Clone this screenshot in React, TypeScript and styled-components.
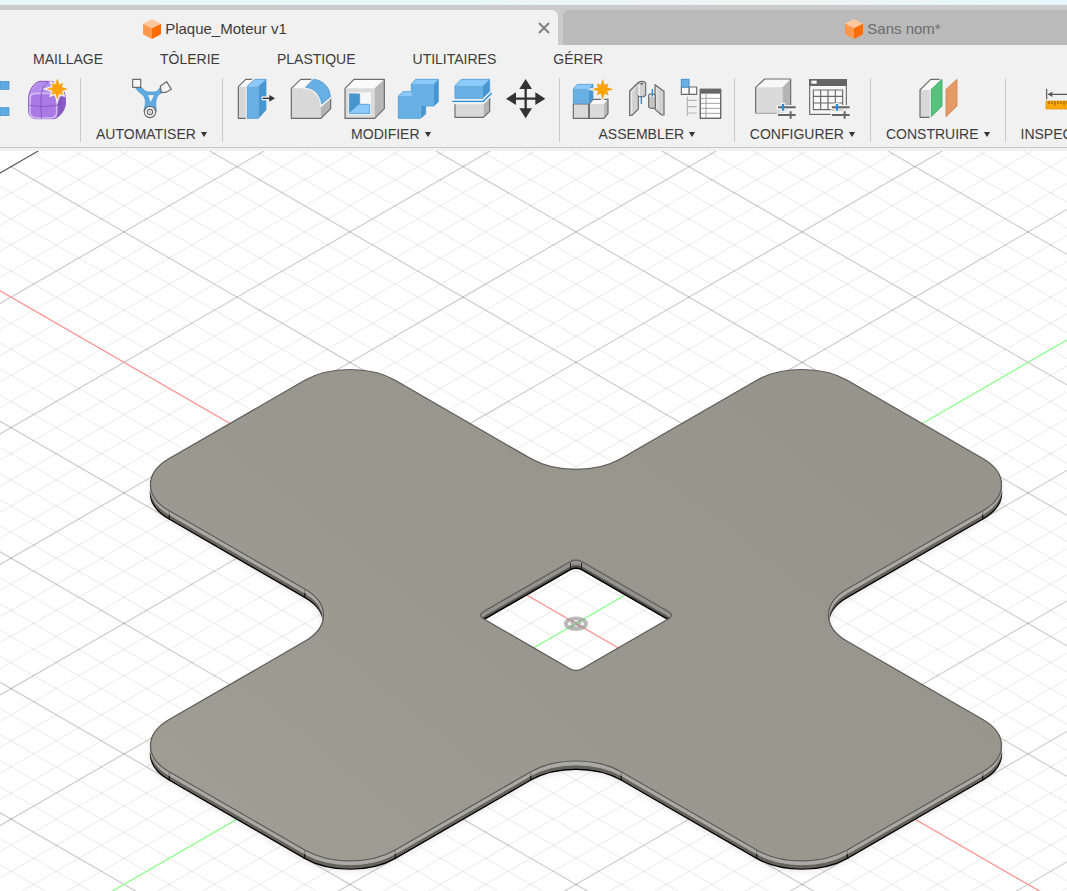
import React from "react";
import styled, { createGlobalStyle } from "styled-components";

const GlobalStyle = createGlobalStyle`
  * { box-sizing: border-box; }
  body { margin: 0; background: #f1f1f1; }
  button { font: inherit; color: inherit; border: 0; background: none; padding: 0; margin: 0; cursor: pointer; }
`;

const Window = styled.div`
  min-height: 100vh;
  display: flex;
  flex-direction: column;
  overflow: hidden;
  font-family: "Liberation Sans", Arial, sans-serif;
  font-size: 14px;
  line-height: 16px;
  color: #3c3c3c;
`;

const TitleStrip = styled.div`
  height: 5px;
  background: linear-gradient(90deg, #e6f6f7, #e9f6f6 45%, #eff4f2 75%, #e4f7fa);
`;

const TabBar = styled.div`
  display: grid;
  grid-template-columns: minmax(0, 558fr) minmax(0, 504fr);
  gap: 5px;
  padding-top: 5px;
  background: #cbcbcb;
`;

const Tab = styled.div<{ $active?: boolean }>`
  display: flex;
  align-items: center;
  height: 35px;
  padding: ${(p) => (p.$active ? "0 8px 0 0" : "0 0 0 156px")};
  border-radius: ${(p) => (p.$active ? "0 6px 0 0" : "6px 0 0 0")};
  background: ${(p) => (p.$active ? "#f1f1f1" : "#bababa")};
  color: ${(p) => (p.$active ? "#3c3c3c" : "#6c6c6c")};
`;

const TabTitle = styled.button<{ $shift?: boolean }>`
  flex: 1;
  display: flex;
  align-items: center;
  justify-content: center;
  gap: 4px;
  padding-right: ${(p) => (p.$shift ? "108px" : "0")};
  padding-top: 2px;
  font-size: 15px;
  line-height: 20px;
`;

const CloseButton = styled.button`
  width: 12px;
  height: 12px;
  svg { display: block; }
`;

const MenuRow = styled.nav`
  display: flex;
  align-items: center;
  gap: 57px;
  height: 29px;
  padding: 0 0 2px 33px;
  background: #f1f1f1;
`;

const MenuItem = styled.button`
  white-space: nowrap;
`;

const Toolbar = styled.div`
  display: flex;
  padding: 4px 0 5px;
  background: #f1f1f1;
  border-bottom: 1px solid #c6c6c6;
  margin-bottom: 3px;
  overflow: hidden;
`;

const Group = styled.div<{ $cut?: boolean }>`
  flex: none;
  display: flex;
  flex-direction: column;
  align-items: ${(p) => (p.$cut ? "flex-end" : "center")};
  gap: 6px;
  width: ${(p) => (p.$cut ? "81px" : "auto")};
  height: 64px;
  padding: 0 12px;
  border-right: 1px solid #cacaca;
`;

const Icons = styled.div`
  display: flex;
  gap: 12px;
`;

const ToolButton = styled.button`
  width: 42px;
  height: 42px;
  svg { display: block; width: 42px; height: 42px; overflow: visible; }
`;

const GroupLabel = styled.button`
  display: flex;
  align-items: center;
  gap: 5px;
  padding: 0 3px;
  white-space: nowrap;
`;

const Viewport = styled.main`
  flex: 1;
  display: flex;
  min-height: 320px;
  background: #fff;
  svg { display: block; width: 100%; height: auto; flex: 1; }
`;

/* ---------- small drawings ---------- */

const OrangeCube = () => (
  <svg width="18" height="20" viewBox="0 0 54 60" aria-hidden="true">
    <path d="M27 0L54 14L27 28L0 14Z" fill="#ffc79d" />
    <path d="M0 14L27 28V60L0 46Z" fill="#ff974d" />
    <path d="M54 14L27 28V60L54 46Z" fill="#ff6c05" />
  </svg>
);

const Caret = () => (
  <svg width="6" height="5" viewBox="0 0 6 5" aria-hidden="true">
    <path d="M0 0H6L3 5Z" fill="#333" />
  </svg>
);

const starPoints = (cx: number, cy: number, r: number) =>
  Array.from({ length: 16 }, (_, i) => {
    const a = (i * Math.PI) / 8 - Math.PI / 2;
    const k = i % 2 ? r * 0.46 : i % 4 ? r * 0.8 : r;
    return `${(cx + k * Math.cos(a)).toFixed(1)},${(cy + k * Math.sin(a)).toFixed(1)}`;
  }).join(" ");

const Star = ({ x, y }: { x: number; y: number }) => (
  <g>
    <polygon points={starPoints(x, y, 30)} fill="#f1f1f1" stroke="#f1f1f1" strokeWidth="9" />
    <polygon points={starPoints(x, y, 30)} fill="#ffa300" stroke="#e39000" strokeWidth="1" />
  </g>
);

const Sliders = ({ x, y }: { x: number; y: number }) => (
  <g transform={`translate(${x} ${y})`} fill="none">
    <path d="M-4 10H53M-4 33H53M15 -4V24M38 18V46" stroke="#f1f1f1" strokeWidth="14" />
    <path d="M0 10H53M0 33H53M38 22V44" stroke="#666" strokeWidth="6" />
    <path d="M15 0V20" stroke="#1e90e8" strokeWidth="7" />
  </g>
);

const edge = { stroke: "#6b6b6b", strokeWidth: 3.5, strokeLinejoin: "round" as const };
const blueEdge = { stroke: "#4f9bd3", strokeWidth: 2.5, strokeLinejoin: "round" as const };

const icons: Record<string, React.ReactNode> = {
  pattern: (
    <g fill="#5faae2" stroke="#3f8fc9" strokeWidth="2">
      <rect x="85" y="10" width="26" height="24" />
      <rect x="85" y="89" width="26" height="24" />
    </g>
  ),
  form: (
    <g>
      <path d="M8 60C8 38 24 12 42 10H72C100 12 118 36 118 62V80C114 100 100 118 84 122H28C16 121 8 112 8 100Z" fill="#c4a0f0" stroke="#8752c0" strokeWidth="3" />
      <path d="M94 62L118 52V80C114 100 104 112 92 118Z" fill="#8c5cc4" />
      <path d="M14 46C22 26 34 14 46 12H72L92 38L84 46Z" fill="#b48ceb" />
      <rect x="12" y="46" width="80" height="74" rx="16" fill="#a97ae4" stroke="#d3b8f5" strokeWidth="5" />
      <path d="M10 82Q50 90 92 82L117 68M46 44Q44 82 46 122M46 44Q50 22 66 12M106 54V102" fill="none" stroke="#8250bc" strokeWidth="2.5" />
      <Star x={94} y={33} />
    </g>
  ),
  automate: (
    <g>
      <path d="M18 18C36 20 36 40 56 42H72C86 42 88 28 96 22L108 38C98 46 88 44 82 56C75 70 78 84 79 100L42 102C43 84 50 76 44 60C38 46 26 46 16 28Z" fill="#5faae2" stroke="#3f8fc9" strokeWidth="2" />
      <path d="M52 50H74L62 76Z" fill="#f1f1f1" stroke="#3f8fc9" strokeWidth="2" />
      <rect x="8" y="4" width="24" height="24" fill="#f7f7f7" {...edge} />
      <path d="M110 11L124 34L108 43H94L91 24Z" fill="#f7f7f7" {...edge} />
      <circle cx="60" cy="102" r="17" fill="#f7f7f7" {...edge} />
      <circle cx="60" cy="102" r="8" fill="#f7f7f7" {...edge} />
      <circle cx="60" cy="102" r="2" fill="#6b6b6b" />
    </g>
  ),
  pressPull: (
    <g>
      <path d="M10 25L32 4H54L34 25V121H10Z" fill="#fafafa" />
      <path d="M10 26H34V121H10Z" fill="#d6d6d6" />
      <path d="M54 4H32L10 26V121H34" fill="none" {...edge} />
      <path d="M32 20L56 0H62V10L37 30V124H32Z" fill="#f1f1f1" />
      <path d="M37 25L60 4H93L70 25Z" fill="#8ccafb" />
      <path d="M37 25H70V121H37Z" fill="#68afe4" />
      <path d="M70 25L93 4V96L70 121Z" fill="#4796d2" />
      <path d="M37 25L60 4H93V96L70 121H37Z" fill="none" {...blueEdge} />
      <path d="M80 61H108" stroke="#f1f1f1" strokeWidth="12" />
      <path d="M83 61H108" stroke="#333" strokeWidth="4" />
      <path d="M103 51L120 61L103 71Z" fill="#333" />
    </g>
  ),
  fillet: (
    <g>
      <path d="M7 31L35 4H72L50 31Z" fill="#fafafa" />
      <path d="M7 31H46C76 32 96 56 96 91V121H7Z" fill="#d8d8d8" />
      <path d="M96 88L125 60V92L96 121Z" fill="#b4b4b4" />
      <path d="M70 4H35L7 31V121H96L125 92V58" fill="none" {...edge} />
      <path d="M48 28L73 4C104 6 124 32 124 58L98 80C94 50 74 30 48 28Z" fill="#68afe4" stroke="#f1f1f1" strokeWidth="8" />
      <path d="M50 28L73 4C104 6 124 32 124 56L98 78C94 48 74 30 50 28Z" fill="#68afe4" {...blueEdge} />
    </g>
  ),
  shell: (
    <g>
      <path d="M6 31L33 4H124L95 31Z" fill="#fafafa" />
      <path d="M6 31H95V121H6Z" fill="#dadada" />
      <path d="M95 31L124 4V92L95 121Z" fill="#b8b8b8" />
      <path d="M6 31L33 4H124V92L95 121H6Z" fill="none" {...edge} />
      <rect x="15" y="43" width="69" height="69" fill="#f6f6f6" />
      <path d="M19 48H50V79L19 106Z" fill="#4796d2" />
      <path d="M19 107L48 79H80V107Z" fill="#8ccafb" />
      <path d="M19 47V107H80V79H50V48Z" fill="none" {...blueEdge} />
    </g>
  ),
  combine: (
    <g>
      <path d="M43 18L56 4H124L111 18Z" fill="#8ccafb" />
      <path d="M124 4V71L111 84H86V108L71 121L71 84L111 18Z" fill="#4796d2" />
      <path d="M4 54L18 41H43V54Z" fill="#8ccafb" />
      <path d="M43 18H111V84H71V121H4V54H43Z" fill="#68afe4" />
      <path d="M43 18L56 4H124V71L111 84H86V108L71 121H4V54L18 41H43Z" fill="none" {...blueEdge} />
    </g>
  ),
  split: (
    <g>
      <path d="M12 23L31 4H116L96 23Z" fill="#8ccafb" />
      <path d="M12 23H96V61H12Z" fill="#68afe4" />
      <path d="M96 23L116 4V42L96 61Z" fill="#4796d2" />
      <path d="M12 23L31 4H116V42L96 61H12Z" fill="none" {...blueEdge} />
      <path d="M12 79H98V119H12Z" fill="#d8d8d8" />
      <path d="M98 79L116 60V100L98 119Z" fill="#b4b4b4" />
      <path d="M12 79V118H97L116 100V60" fill="none" {...edge} />
      <path d="M4 70H97L122 45" fill="none" stroke="#f1f1f1" strokeWidth="13" />
      <path d="M4 70H97L122 45" fill="none" stroke="#1e8fe6" strokeWidth="4" />
    </g>
  ),
  move: (
    <g fill="#333">
      <path d="M22 62H102M62 22V102" stroke="#333" strokeWidth="7" />
      <path d="M3 62L33 43V81ZM121 62L91 43V81ZM62 3L43 33H81ZM62 121L43 91H81Z" />
    </g>
  ),
  newComponent: (
    <g>
      <path d="M4 78H50V121H4Z" fill="#dadada" {...edge} />
      <path d="M52 78L63 64H108L96 78Z" fill="#fafafa" />
      <path d="M52 78H96V121H52Z" fill="#dadada" />
      <path d="M96 78L108 64V106L96 121Z" fill="#b8b8b8" />
      <path d="M52 78L63 64H108V106L96 121H52Z" fill="none" {...edge} />
      <path d="M4 32L16 19H63L51 32Z" fill="#8ccafb" />
      <path d="M4 32H51V76H4Z" fill="#68afe4" />
      <path d="M51 32L63 19V63L51 76Z" fill="#4796d2" />
      <path d="M4 32L16 19H63V63L51 76H4Z" fill="none" {...blueEdge} />
      <Star x={92} y={34} />
    </g>
  ),
  joint: (
    <g>
      <path d="M11 39L37 13V93L18 112H11Z" fill="#d0d0d0" {...edge} />
      <path d="M17 42L36 22M17 42V106" fill="none" stroke="#f4f4f4" strokeWidth="3" />
      <path d="M37 16C38 8 58 8 59 16V50C58 58 44 58 37 53L34 50V18Z" fill="#d0d0d0" {...edge} />
      <path d="M36 18V52" stroke="#d0d0d0" strokeWidth="6" />
      <path d="M40 20V54" stroke="#f0f0f0" strokeWidth="4" />
      <ellipse cx="47" cy="17" rx="4" ry="3" fill="#666" />
      <path d="M46 55V78" stroke="#1e8fe6" strokeWidth="4" />
      <path d="M87 20L114 40V111H107L87 94Z" fill="#d0d0d0" {...edge} />
      <path d="M92 29V92M96 32V90" stroke="#f0f0f0" strokeWidth="2" />
      <path d="M68 53C68 46 86 46 88 53V90C80 93 68 90 68 86Z" fill="#c4c4c4" {...edge} />
      <ellipse cx="78" cy="54" rx="8" ry="4" fill="#f0f0f0" />
      <path d="M79 33V56" stroke="#1e8fe6" strokeWidth="4" />
    </g>
  ),
  bom: (
    <g>
      <rect x="27" y="27" width="23" height="22" fill="#fafafa" {...edge} />
      <rect x="4" y="27" width="23" height="22" fill="#fafafa" {...edge} />
      <rect x="4" y="4" width="23" height="23" fill="#68afe4" stroke="#3f8fc9" strokeWidth="3" />
      <path d="M22 56V114M22 67H50M22 86H50M22 105H50" fill="none" stroke="#b3b3b3" strokeWidth="3.5" />
      <rect x="61" y="34" width="61" height="87" fill="#fff" {...edge} />
      <path d="M60 33H123V47H60Z" fill="#666" />
      <path d="M61 61H122M61 76H122M61 91H122M61 106H122M78 47V121" stroke="#a2a2a2" strokeWidth="3" />
      <rect x="61" y="34" width="61" height="87" fill="none" {...edge} />
    </g>
  ),
  configure: (
    <g>
      <path d="M5 28L32 3H110L86 28Z" fill="#f8f8f8" />
      <path d="M5 28H86V106H5Z" fill="#dadada" />
      <path d="M86 28L110 3V84L86 106Z" fill="#b4b4b4" />
      <path d="M5 106V28L32 3H110V84" fill="none" {...edge} />
      <path d="M5 106H78" {...edge} stroke="#a8a8a8" />
      <Sliders x={72} y={78} />
    </g>
  ),
  configTable: (
    <g>
      <rect x="5" y="5" width="110" height="104" fill="#f8f8f8" {...edge} />
      <path d="M3 3H117V24H3Z" fill="#666" />
      <rect x="10" y="8" width="16" height="9" fill="#fff" />
      <path d="M16 36H104V95H16ZM16 55H104M16 75H104M38 36V95M60 36V95M82 36V75" fill="none" {...edge} />
      <Sliders x={72} y={78} />
    </g>
  ),
  construct: (
    <g>
      <path d="M9 36L41 4H68L43 36Z" fill="#fafafa" />
      <path d="M9 36H38V118H9Z" fill="#d8d8d8" />
      <path d="M38 118H9V36L41 4H68" fill="none" {...edge} />
      <path d="M43 34L75 4V84L43 116Z" fill="#57c27e" stroke="#3aa864" strokeWidth="2.5" />
      <path d="M87 34L120 4V84L87 116Z" fill="#e59a66" stroke="#cf834d" strokeWidth="2.5" />
    </g>
  ),
  measure: (
    <g>
      <path d="M5 33V64M121 33V64M10 49H116" stroke="#555" strokeWidth="3.5" />
      <path d="M8 49L22 41V57ZM118 49L104 41V57Z" fill="#555" />
      <rect x="3" y="69" width="120" height="24" fill="#ffa800" stroke="#e08c00" strokeWidth="2" />
      <path d="M12 70V78M21 70V78M30 70V82M39 70V78M48 70V78M57 70V82M66 70V78M75 70V78M84 70V82M93 70V78M102 70V78M111 70V82" stroke="#7a5200" strokeWidth="3" />
    </g>
  ),
};

const Tool = ({ name, title }: { name: string; title: string }) => (
  <ToolButton type="button" aria-label={title}>
    <svg viewBox="0 0 126 126" aria-hidden="true">{icons[name]}</svg>
  </ToolButton>
);

/* ---------- isometric scene ---------- */

const HX = 113;
const HY = 65.25;
const TAN = HY / HX;
const OX = 576;
const OY = 623.4;
const THICK = 8.2;

type UV = [number, number];
const iso = ([u, v]: UV, dz = 0): UV => [OX + (u + v) * HX, OY - THICK + dz + (u - v) * HY];

const CORNERS: UV[] = [
  [-3, 1], [-1, 1], [-1, 3], [1, 3], [1, 1], [3, 1],
  [3, -1], [1, -1], [1, -3], [-1, -3], [-1, -1], [-3, -1],
];
const H = 0.437;
const HOLE: UV[] = [[-H, H], [H, H], [H, -H], [-H, -H]];

/* Closed outline with every corner rounded by a circle seen in isometry. */
const rounded = (pts: UV[], r: number, dz = 0) => {
  const n = pts.length;
  const len = r * Math.hypot(HX, HY);
  let d = "";
  pts.forEach((p, i) => {
    const a = pts[(i + n - 1) % n];
    const b = pts[(i + 1) % n];
    const dirA: UV = [Math.sign(a[0] - p[0]), Math.sign(a[1] - p[1])];
    const dirB: UV = [Math.sign(b[0] - p[0]), Math.sign(b[1] - p[1])];
    const s = iso([p[0] + dirA[0] * r, p[1] + dirA[1] * r], dz);
    const e = iso([p[0] + dirB[0] * r, p[1] + dirB[1] * r], dz);
    const turn = -dirA[0] * dirB[1] + dirA[1] * dirB[0];
    const sweep = turn < 0 ? 1 : 0;
    d += `${i ? "L" : "M"}${s[0].toFixed(2)} ${s[1].toFixed(2)}A${(len * 1.2247).toFixed(2)} ${(len * 0.7071).toFixed(2)} 0 0 ${sweep} ${e[0].toFixed(2)} ${e[1].toFixed(2)}`;
  });
  return d + "Z";
};

const R = 0.4;
const RH = 0.05;
const plate = (dz: number) => rounded(CORNERS, R, dz);
const hole = (dz: number) => rounded(HOLE, RH, dz);

/* Points where the front walls pass from flat to curved. */
const SEAMS: UV[] = [
  [-3 + R, -1], [-1 - R, -1], [-1 + R, -3], [1 - R, -3], [1, -3 + R],
  [1, -1 - R], [1 + R, -1], [3 - R, -1], [3, -1 + R], [3, 1 - R], [1, 3 - R],
];

const gridLines = (dir: 1 | -1) => {
  const lines: React.ReactNode[] = [];
  const from = dir === -1 ? -30 : -36;
  for (let i = from; i <= 36; i++) {
    if (i === 0) continue;
    const major = i % 5 === 0;
    const border = dir === -1 && i === -30;
    const y0 = OY - dir * TAN * OX + (i * 2 * HY) / 5;
    lines.push(
      <line
        key={`${dir}${i}`}
        x1={-40}
        x2={1120}
        y1={y0 - dir * TAN * 40}
        y2={y0 + dir * TAN * 1120}
        stroke="#000"
        strokeOpacity={border ? 0.65 : major ? 0.2 : 0.065}
        strokeWidth={1.2}
      />
    );
  }
  return lines;
};

const EDGE_Y = OY + TAN * OX - 12 * HY;

const Scene = () => (
  <svg viewBox="0 151 1067 740" preserveAspectRatio="xMidYMid slice" role="img" aria-label="Plaque_Moteur v1">
    <defs>
      <linearGradient id="face" x1="0" y1="1" x2="1" y2="0.3">
        <stop offset="0" stopColor="#a19e96" />
        <stop offset="0.5" stopColor="#9a978f" />
        <stop offset="1" stopColor="#97948c" />
      </linearGradient>
      <filter id="soft" x="-5%" y="-5%" width="110%" height="110%">
        <feGaussianBlur stdDeviation="4" />
      </filter>
      <clipPath id="floor">
        <path d={`M-40 ${EDGE_Y + 40 * TAN - 1}L${EDGE_Y / TAN} -1H1120V1000H-40Z`} />
      </clipPath>
      <clipPath id="holeTop"><path d={hole(0)} /></clipPath>
      <clipPath id="holeBottom"><path d={hole(THICK)} /></clipPath>
      <g id="grid">
        <g clipPath="url(#floor)">
          {gridLines(1)}
          {gridLines(-1)}
        </g>
        <line x1={-40} x2={1120} y1={OY - TAN * (OX + 40)} y2={OY + TAN * (1120 - OX)} stroke="#ff9494" strokeWidth="1.3" />
        <line x1={-40} x2={1120} y1={OY + TAN * (OX + 40)} y2={OY - TAN * (1120 - OX)} stroke="#8cff8c" strokeWidth="1.3" />
      </g>
    </defs>

    <use href="#grid" />

    <path d={plate(THICK + 1)} fill="#000" opacity="0.13" filter="url(#soft)" />
    <path d={plate(THICK)} fill="#5d5c55" stroke="#000" strokeWidth="1.4" />
    {[7, 6, 5, 4].map((z) => (
      <path key={z} d={plate(z)} fill="#66655d" stroke="#66655d" strokeWidth="0.6" />
    ))}
    {[3.8, 2.8, 1.8, 0.8].map((z) => (
      <path key={z} d={plate(z)} fill="#aaaaa6" stroke="#aaaaa6" strokeWidth="1" />
    ))}
    {SEAMS.map((p, i) => {
      const [x, y] = iso(p);
      return (
        <g key={i}>
          <line x1={x} x2={x} y1={y} y2={y + 4} stroke="#777" />
          <line x1={x} x2={x} y1={y + 4} y2={y + THICK} stroke="#000" />
        </g>
      );
    })}
    <path d={plate(0)} fill="url(#face)" stroke="#5c5b57" strokeWidth="1.2" />

    <g clipPath="url(#holeTop)">
      <path d={hole(0)} fill="#92928f" />
      <path d={hole(5)} fill="#55544e" />
      <path d={hole(THICK)} fill="#fff" />
      <g clipPath="url(#holeBottom)">
        <use href="#grid" />
        <ellipse cx={OX} cy={OY + 0.3} rx="10" ry="5.2" fill="none" stroke="#8a8a8a" strokeOpacity="0.6" strokeWidth="4" />
        <path d="M571 621.5L581 626.5M571 626.5L581 621.5" stroke="#888" strokeOpacity="0.55" strokeWidth="4" />
      </g>
      <path d={hole(THICK)} fill="none" stroke="#000" strokeWidth="1.5" />
      {[-5.5, 5.5].map((dx) => (
        <line key={dx} x1={OX + dx} x2={OX + dx} y1={563} y2={569} stroke="#222" />
      ))}
    </g>
    <path d={hole(0)} fill="none" stroke="#5c5b57" strokeWidth="1.2" />
  </svg>
);

/* ---------- page ---------- */

const menus = ["MAILLAGE", "TÔLERIE", "PLASTIQUE", "UTILITAIRES", "GÉRER"];

const groups: { label: string; tools: [string, string][] }[] = [
  { label: "AUTOMATISER", tools: [["automate", "Modélisation automatisée"]] },
  {
    label: "MODIFIER",
    tools: [
      ["pressPull", "Appuyer/Tirer"],
      ["fillet", "Congé"],
      ["shell", "Coque"],
      ["combine", "Combiner"],
      ["split", "Scinder"],
      ["move", "Déplacer"],
    ],
  },
  { label: "ASSEMBLER", tools: [["newComponent", "Nouveau composant"], ["joint", "Liaison"], ["bom", "Nomenclature"]] },
  { label: "CONFIGURER", tools: [["configure", "Configurer"], ["configTable", "Table de configuration"]] },
  { label: "CONSTRUIRE", tools: [["construct", "Plan de décalage"]] },
  { label: "INSPECTER", tools: [["measure", "Mesurer"]] },
];

export default function App() {
  return (
    <Window>
      <GlobalStyle />
      <TitleStrip />
      <TabBar>
        <Tab $active>
          <TabTitle type="button" $shift>
            <OrangeCube />
            Plaque_Moteur v1
          </TabTitle>
          <CloseButton type="button" aria-label="Fermer">
            <svg width="12" height="12" viewBox="0 0 12 12" aria-hidden="true">
              <path d="M1 1L11 11M11 1L1 11" stroke="#7c7c7c" strokeWidth="1.8" />
            </svg>
          </CloseButton>
        </Tab>
        <Tab>
          <TabTitle type="button">
            <OrangeCube />
            Sans nom*
          </TabTitle>
        </Tab>
      </TabBar>
      <MenuRow>
        {menus.map((m) => (
          <MenuItem type="button" key={m}>{m}</MenuItem>
        ))}
      </MenuRow>
      <Toolbar>
        <Group $cut>
          <Icons>
            <Tool name="pattern" title="Réseau" />
            <Tool name="form" title="Créer une forme" />
          </Icons>
        </Group>
        {groups.map((g) => (
          <Group key={g.label}>
            <Icons>
              {g.tools.map(([name, title]) => (
                <Tool key={name} name={name} title={title} />
              ))}
            </Icons>
            <GroupLabel type="button" aria-haspopup="menu">
              {g.label}
              <Caret />
            </GroupLabel>
          </Group>
        ))}
      </Toolbar>
      <Viewport>
        <Scene />
      </Viewport>
    </Window>
  );
}
